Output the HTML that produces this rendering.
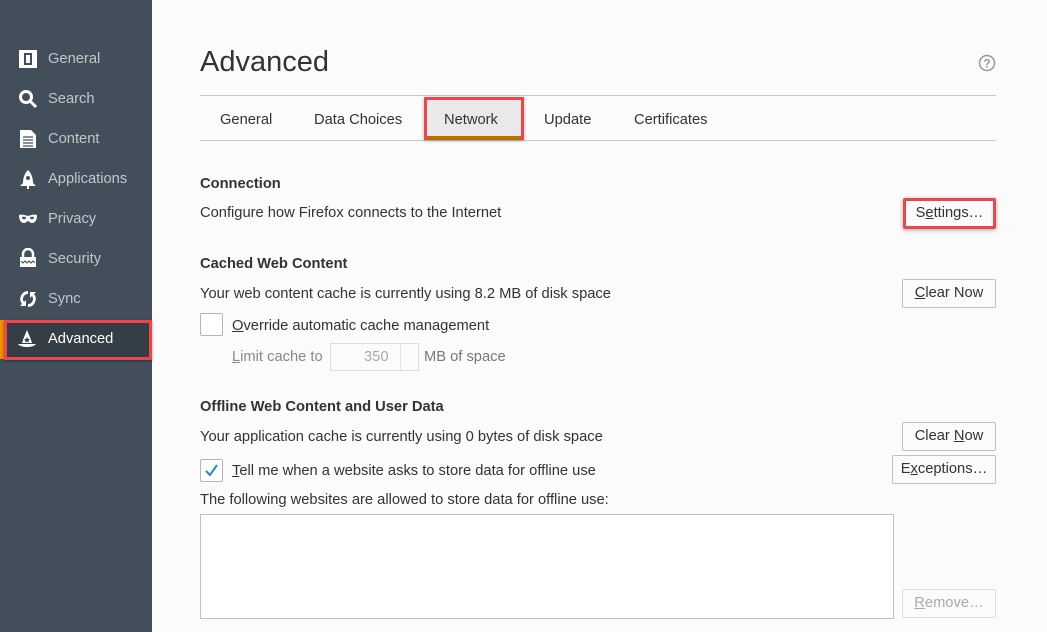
<!DOCTYPE html>
<html><head><meta charset="utf-8"><style>
*{margin:0;padding:0;box-sizing:border-box}
body{width:1047px;height:632px;overflow:hidden;background:#fbfbfb;font-family:"Liberation Sans",sans-serif;color:#333;position:relative;font-size:14.7px}
.side{position:absolute;left:0;top:0;width:152px;height:632px;background:#424f5a}
.it{position:absolute;left:48px;color:#c1c6cb;font-size:14.7px}
.ic{position:absolute;left:18px;width:20px;height:20px}
.a{position:absolute;white-space:nowrap}
.btn{position:absolute;border:1px solid #c1c1c1;background:#fbfbfb;border-radius:2px;text-align:center;font-size:14.7px;line-height:27px;height:29px;color:#333}
u{text-decoration:underline}
</style></head><body>
<div class="side">
 <svg class="ic" style="top:49px" viewBox="0 0 20 20"><rect x="1" y="1" width="18" height="18" fill="#fff"/><rect x="6" y="4" width="8" height="12" fill="#424f5a"/><rect x="8" y="6" width="4" height="8" fill="#fff"/></svg>
 <div class="it" style="top:51px">General</div>
 <svg class="ic" style="top:89px" viewBox="0 0 20 20"><circle cx="8" cy="8" r="5.5" fill="none" stroke="#fff" stroke-width="3"/><path d="M12 12l6 6" stroke="#fff" stroke-width="3"/></svg>
 <div class="it" style="top:91px">Search</div>
 <svg class="ic" style="top:129px" viewBox="0 0 20 20"><path d="M2 1h11l5 5v13H2z" fill="#fff"/><path d="M5 8h10M5 11h10M5 14h10M5 17h10" stroke="#424f5a" stroke-width="1.3"/></svg>
 <div class="it" style="top:131px">Content</div>
 <svg class="ic" style="top:169px" viewBox="0 0 20 20"><path d="M10 1C6 5 5 10 5 14l-3 3h16l-3-3c0-4-1-9-5-13z" fill="#fff"/><circle cx="10" cy="9" r="2" fill="#424f5a"/><path d="M9 17h2v3H9z" fill="#fff"/></svg>
 <div class="it" style="top:171px">Applications</div>
 <svg class="ic" style="top:209px" viewBox="0 0 20 20"><path d="M1 6c3-1 6 0 9 1 3-1 6-2 9-1 0 5-2 8-5 8-2 0-3-2-4-2s-2 2-4 2c-3 0-5-3-5-8z" fill="#fff"/><ellipse cx="6" cy="9" rx="2" ry="1.2" fill="#424f5a"/><ellipse cx="14" cy="9" rx="2" ry="1.2" fill="#424f5a"/></svg>
 <div class="it" style="top:211px">Privacy</div>
 <svg class="ic" style="top:248px" viewBox="0 0 20 20"><path d="M5 9V6a5 5 0 0 1 10 0v3" fill="none" stroke="#fff" stroke-width="2.5"/><rect x="2" y="9" width="16" height="10" fill="#fff"/><path d="M3 13l2 2 2-2 2 2 2-2 2 2 2-2 2 2" stroke="#424f5a" fill="none"/></svg>
 <div class="it" style="top:251px">Security</div>
 <svg class="ic" style="top:289px" viewBox="0 0 20 20"><path d="M10 2a8 8 0 0 0-6 13l-2 2h6v-6l-2 2a5 5 0 0 1 4-8zM10 18a8 8 0 0 0 6-13l2-2h-6v6l2-2a5 5 0 0 1-4 8z" fill="#fff"/></svg>
 <div class="it" style="top:291px">Sync</div>
</div>
<div style="position:absolute;left:0;top:320px;width:5px;height:39px;background:#f29300"></div>
<div style="position:absolute;left:4px;top:320px;width:148px;height:40px;background:#343e47;border:3px solid #f0444c;box-shadow:0 1px 3px rgba(0,0,0,.4)"></div>
<svg class="ic" style="top:329px;left:17px" viewBox="0 0 20 20"><path d="M10 1C8 6 6 10 5 14h10C14 10 12 6 10 1z" fill="#fff"/><path d="M1 15c3 4 15 4 18 0z" fill="#fff"/><path d="M10 8l1 2 2 0-1.5 1.5.5 2-2-1-2 1 .5-2L7 10h2z" fill="#343e47"/></svg>
<div class="it" style="top:331px;color:#fff">Advanced</div>

<div class="a" style="left:200px;top:46px;font-size:29px;color:#333">Advanced</div>
<svg style="position:absolute;left:978px;top:54px" width="18" height="18" viewBox="0 0 18 18"><circle cx="9" cy="9" r="7.5" fill="none" stroke="#999" stroke-width="1.5"/><text x="9" y="13.5" text-anchor="middle" font-size="12" font-weight="bold" fill="#999" font-family="Liberation Sans">?</text></svg>

<div style="position:absolute;left:200px;top:95px;width:796px;height:1px;background:#c8c8c8"></div>
<div style="position:absolute;left:200px;top:140px;width:796px;height:1px;background:#c8c8c8"></div>
<div style="position:absolute;left:424px;top:97px;width:100px;height:43px;background:#e9e9e9;border:3px solid #f0444c;box-shadow:0 1px 3px rgba(0,0,0,.3)"></div>
<div style="position:absolute;left:427px;top:136px;width:94px;height:4px;background:#b86f00"></div>
<div class="a" style="left:220px;top:112px">General</div>
<div class="a" style="left:314px;top:112px">Data Choices</div>
<div class="a" style="left:444px;top:112px">Network</div>
<div class="a" style="left:544px;top:112px">Update</div>
<div class="a" style="left:634px;top:112px">Certificates</div>

<div class="a" style="left:200px;top:176px;font-weight:bold">Connection</div>
<div class="a" style="left:200px;top:205px">Configure how Firefox connects to the Internet</div>
<div class="btn" style="left:903px;top:198px;width:93px;height:31px;border:3px solid #f0444c;line-height:25px;box-shadow:0 1px 4px rgba(0,0,0,.35)">S<u>e</u>ttings…</div>

<div class="a" style="left:200px;top:256px;font-weight:bold">Cached Web Content</div>
<div class="a" style="left:200px;top:286px">Your web content cache is currently using 8.2 MB of disk space</div>
<div class="btn" style="left:902px;top:279px;width:94px"><u>C</u>lear Now</div>
<div style="position:absolute;left:200px;top:313px;width:23px;height:23px;border:1px solid #b5b5b5;border-radius:2px;background:#fff"></div>
<div class="a" style="left:232px;top:318px"><u>O</u>verride automatic cache management</div>
<div class="a" style="left:232px;top:349px;color:#888"><u>L</u>imit cache to</div>
<div style="position:absolute;left:330px;top:343px;width:89px;height:28px;border:1px solid #ddd;background:#fbfbfb"></div>
<div class="a" style="left:364px;top:349px;color:#aaa">350</div>
<div style="position:absolute;left:400px;top:344px;width:18px;height:26px;border-left:1px solid #e5e5e5"></div>
<div class="a" style="left:424px;top:349px;color:#777">MB of space</div>

<div class="a" style="left:200px;top:399px;font-weight:bold">Offline Web Content and User Data</div>
<div class="a" style="left:200px;top:429px">Your application cache is currently using 0 bytes of disk space</div>
<div class="btn" style="left:902px;top:422px;width:94px">Clear <u>N</u>ow</div>
<div style="position:absolute;left:200px;top:459px;width:23px;height:23px;border:1px solid #b5b5b5;border-radius:2px;background:#fff"></div>
<svg style="position:absolute;left:203px;top:462px" width="17" height="17" viewBox="0 0 17 17"><path d="M3 9l4 4 7-10" fill="none" stroke="#1e88d0" stroke-width="2"/></svg>
<div class="a" style="left:232px;top:463px"><u>T</u>ell me when a website asks to store data for offline use</div>
<div class="btn" style="left:892px;top:455px;width:104px">E<u>x</u>ceptions…</div>
<div class="a" style="left:200px;top:492px">The following websites are allowed to store data for offline use:</div>
<div style="position:absolute;left:200px;top:514px;width:694px;height:105px;border:1px solid #c1c1c1;background:#fff"></div>
<div class="btn" style="left:902px;top:589px;width:94px;color:#aaa;border-color:#ddd"><u>R</u>emove…</div>
</body></html>
